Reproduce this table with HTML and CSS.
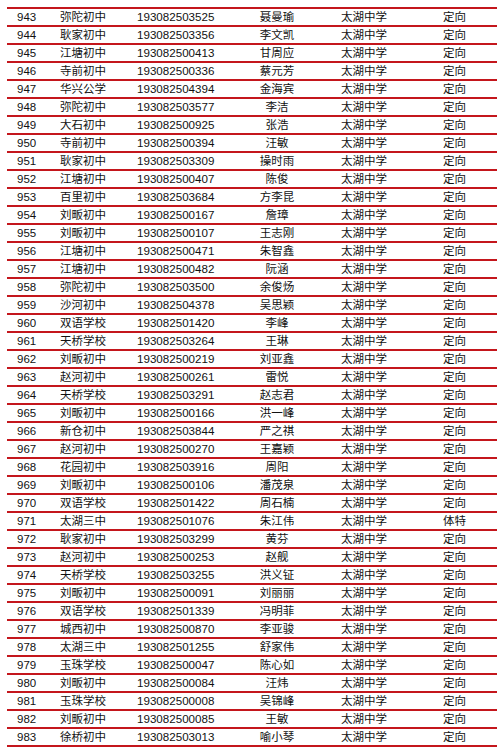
FILE: index.html
```html
<!DOCTYPE html>
<html lang="zh">
<head>
<meta charset="utf-8">
<link rel="stylesheet" href="styles.css">
</head>
<body>
<div class="list">
<div class="row"><span class="rank">943</span><span class="cell">弥陀初中</span><span class="id">193082503525</span><span class="name">聂曼瑜</span><span class="dest">太湖中学</span><span class="cell">定向</span></div>
<div class="row"><span class="rank">944</span><span class="cell">耿家初中</span><span class="id">193082503356</span><span class="name">李文凯</span><span class="dest">太湖中学</span><span class="cell">定向</span></div>
<div class="row"><span class="rank">945</span><span class="cell">江塘初中</span><span class="id">193082500413</span><span class="name">甘周应</span><span class="dest">太湖中学</span><span class="cell">定向</span></div>
<div class="row"><span class="rank">946</span><span class="cell">寺前初中</span><span class="id">193082500336</span><span class="name">蔡元芳</span><span class="dest">太湖中学</span><span class="cell">定向</span></div>
<div class="row"><span class="rank">947</span><span class="cell">华兴公学</span><span class="id">193082504394</span><span class="name">金海宾</span><span class="dest">太湖中学</span><span class="cell">定向</span></div>
<div class="row"><span class="rank">948</span><span class="cell">弥陀初中</span><span class="id">193082503577</span><span class="name">李洁</span><span class="dest">太湖中学</span><span class="cell">定向</span></div>
<div class="row"><span class="rank">949</span><span class="cell">大石初中</span><span class="id">193082500925</span><span class="name">张浩</span><span class="dest">太湖中学</span><span class="cell">定向</span></div>
<div class="row"><span class="rank">950</span><span class="cell">寺前初中</span><span class="id">193082500394</span><span class="name">汪敏</span><span class="dest">太湖中学</span><span class="cell">定向</span></div>
<div class="row"><span class="rank">951</span><span class="cell">耿家初中</span><span class="id">193082503309</span><span class="name">操时雨</span><span class="dest">太湖中学</span><span class="cell">定向</span></div>
<div class="row"><span class="rank">952</span><span class="cell">江塘初中</span><span class="id">193082500407</span><span class="name">陈俊</span><span class="dest">太湖中学</span><span class="cell">定向</span></div>
<div class="row"><span class="rank">953</span><span class="cell">百里初中</span><span class="id">193082503684</span><span class="name">方李昆</span><span class="dest">太湖中学</span><span class="cell">定向</span></div>
<div class="row"><span class="rank">954</span><span class="cell">刘畈初中</span><span class="id">193082500167</span><span class="name">詹璋</span><span class="dest">太湖中学</span><span class="cell">定向</span></div>
<div class="row"><span class="rank">955</span><span class="cell">刘畈初中</span><span class="id">193082500107</span><span class="name">王志刚</span><span class="dest">太湖中学</span><span class="cell">定向</span></div>
<div class="row"><span class="rank">956</span><span class="cell">江塘初中</span><span class="id">193082500471</span><span class="name">朱智鑫</span><span class="dest">太湖中学</span><span class="cell">定向</span></div>
<div class="row"><span class="rank">957</span><span class="cell">江塘初中</span><span class="id">193082500482</span><span class="name">阮涵</span><span class="dest">太湖中学</span><span class="cell">定向</span></div>
<div class="row"><span class="rank">958</span><span class="cell">弥陀初中</span><span class="id">193082503500</span><span class="name">余俊炀</span><span class="dest">太湖中学</span><span class="cell">定向</span></div>
<div class="row"><span class="rank">959</span><span class="cell">沙河初中</span><span class="id">193082504378</span><span class="name">吴思颖</span><span class="dest">太湖中学</span><span class="cell">定向</span></div>
<div class="row"><span class="rank">960</span><span class="cell">双语学校</span><span class="id">193082501420</span><span class="name">李峰</span><span class="dest">太湖中学</span><span class="cell">定向</span></div>
<div class="row"><span class="rank">961</span><span class="cell">天桥学校</span><span class="id">193082503264</span><span class="name">王琳</span><span class="dest">太湖中学</span><span class="cell">定向</span></div>
<div class="row"><span class="rank">962</span><span class="cell">刘畈初中</span><span class="id">193082500219</span><span class="name">刘亚鑫</span><span class="dest">太湖中学</span><span class="cell">定向</span></div>
<div class="row"><span class="rank">963</span><span class="cell">赵河初中</span><span class="id">193082500261</span><span class="name">雷悦</span><span class="dest">太湖中学</span><span class="cell">定向</span></div>
<div class="row"><span class="rank">964</span><span class="cell">天桥学校</span><span class="id">193082503291</span><span class="name">赵志君</span><span class="dest">太湖中学</span><span class="cell">定向</span></div>
<div class="row"><span class="rank">965</span><span class="cell">刘畈初中</span><span class="id">193082500166</span><span class="name">洪一峰</span><span class="dest">太湖中学</span><span class="cell">定向</span></div>
<div class="row"><span class="rank">966</span><span class="cell">新仓初中</span><span class="id">193082503844</span><span class="name">严之祺</span><span class="dest">太湖中学</span><span class="cell">定向</span></div>
<div class="row"><span class="rank">967</span><span class="cell">赵河初中</span><span class="id">193082500270</span><span class="name">王嘉颖</span><span class="dest">太湖中学</span><span class="cell">定向</span></div>
<div class="row"><span class="rank">968</span><span class="cell">花园初中</span><span class="id">193082503916</span><span class="name">周阳</span><span class="dest">太湖中学</span><span class="cell">定向</span></div>
<div class="row"><span class="rank">969</span><span class="cell">刘畈初中</span><span class="id">193082500106</span><span class="name">潘茂泉</span><span class="dest">太湖中学</span><span class="cell">定向</span></div>
<div class="row"><span class="rank">970</span><span class="cell">双语学校</span><span class="id">193082501422</span><span class="name">周石楠</span><span class="dest">太湖中学</span><span class="cell">定向</span></div>
<div class="row"><span class="rank">971</span><span class="cell">太湖三中</span><span class="id">193082501076</span><span class="name">朱江伟</span><span class="dest">太湖中学</span><span class="cell">体特</span></div>
<div class="row"><span class="rank">972</span><span class="cell">耿家初中</span><span class="id">193082503299</span><span class="name">黄芬</span><span class="dest">太湖中学</span><span class="cell">定向</span></div>
<div class="row"><span class="rank">973</span><span class="cell">赵河初中</span><span class="id">193082500253</span><span class="name">赵舰</span><span class="dest">太湖中学</span><span class="cell">定向</span></div>
<div class="row"><span class="rank">974</span><span class="cell">天桥学校</span><span class="id">193082503255</span><span class="name">洪义钲</span><span class="dest">太湖中学</span><span class="cell">定向</span></div>
<div class="row"><span class="rank">975</span><span class="cell">刘畈初中</span><span class="id">193082500091</span><span class="name">刘丽丽</span><span class="dest">太湖中学</span><span class="cell">定向</span></div>
<div class="row"><span class="rank">976</span><span class="cell">双语学校</span><span class="id">193082501339</span><span class="name">冯明菲</span><span class="dest">太湖中学</span><span class="cell">定向</span></div>
<div class="row"><span class="rank">977</span><span class="cell">城西初中</span><span class="id">193082500870</span><span class="name">李亚骏</span><span class="dest">太湖中学</span><span class="cell">定向</span></div>
<div class="row"><span class="rank">978</span><span class="cell">太湖三中</span><span class="id">193082501255</span><span class="name">舒家伟</span><span class="dest">太湖中学</span><span class="cell">定向</span></div>
<div class="row"><span class="rank">979</span><span class="cell">玉珠学校</span><span class="id">193082500047</span><span class="name">陈心如</span><span class="dest">太湖中学</span><span class="cell">定向</span></div>
<div class="row"><span class="rank">980</span><span class="cell">刘畈初中</span><span class="id">193082500084</span><span class="name">汪炜</span><span class="dest">太湖中学</span><span class="cell">定向</span></div>
<div class="row"><span class="rank">981</span><span class="cell">玉珠学校</span><span class="id">193082500008</span><span class="name">吴锦峰</span><span class="dest">太湖中学</span><span class="cell">定向</span></div>
<div class="row"><span class="rank">982</span><span class="cell">刘畈初中</span><span class="id">193082500085</span><span class="name">王敏</span><span class="dest">太湖中学</span><span class="cell">定向</span></div>
<div class="row"><span class="rank">983</span><span class="cell">徐桥初中</span><span class="id">193082503013</span><span class="name">喻小琴</span><span class="dest">太湖中学</span><span class="cell">定向</span></div>
</div>
</body>
</html>
```

FILE: styles.css
```css
html, body {
  margin: 0;
  padding: 0;
  background: #ffffff;
}

body {
  font-family: "Liberation Serif", "Noto Sans CJK SC", serif;
  font-size: 11.5px;
  color: #111111;
}

.list {
  margin: 7px 0 0 7px;
  width: 490px;
  border-bottom: 2px solid #c4161c;
}

.row {
  display: grid;
  grid-template-columns: 43px 77px 113px 54px 139px 1fr;
  align-items: center;
  height: 16px;
  padding-left: 10px;
  border-top: 2px solid #c4161c;
  line-height: 16px;
  white-space: nowrap;
}

.rank {
  font-family: "Liberation Sans", "Noto Sans CJK SC", sans-serif;
}

.id {
  font-family: "Liberation Sans", sans-serif;
  font-size: 11.6px;
}

.name {
  text-align: center;
  overflow: visible;
}

.dest {
  padding-left: 37px;
}
```
